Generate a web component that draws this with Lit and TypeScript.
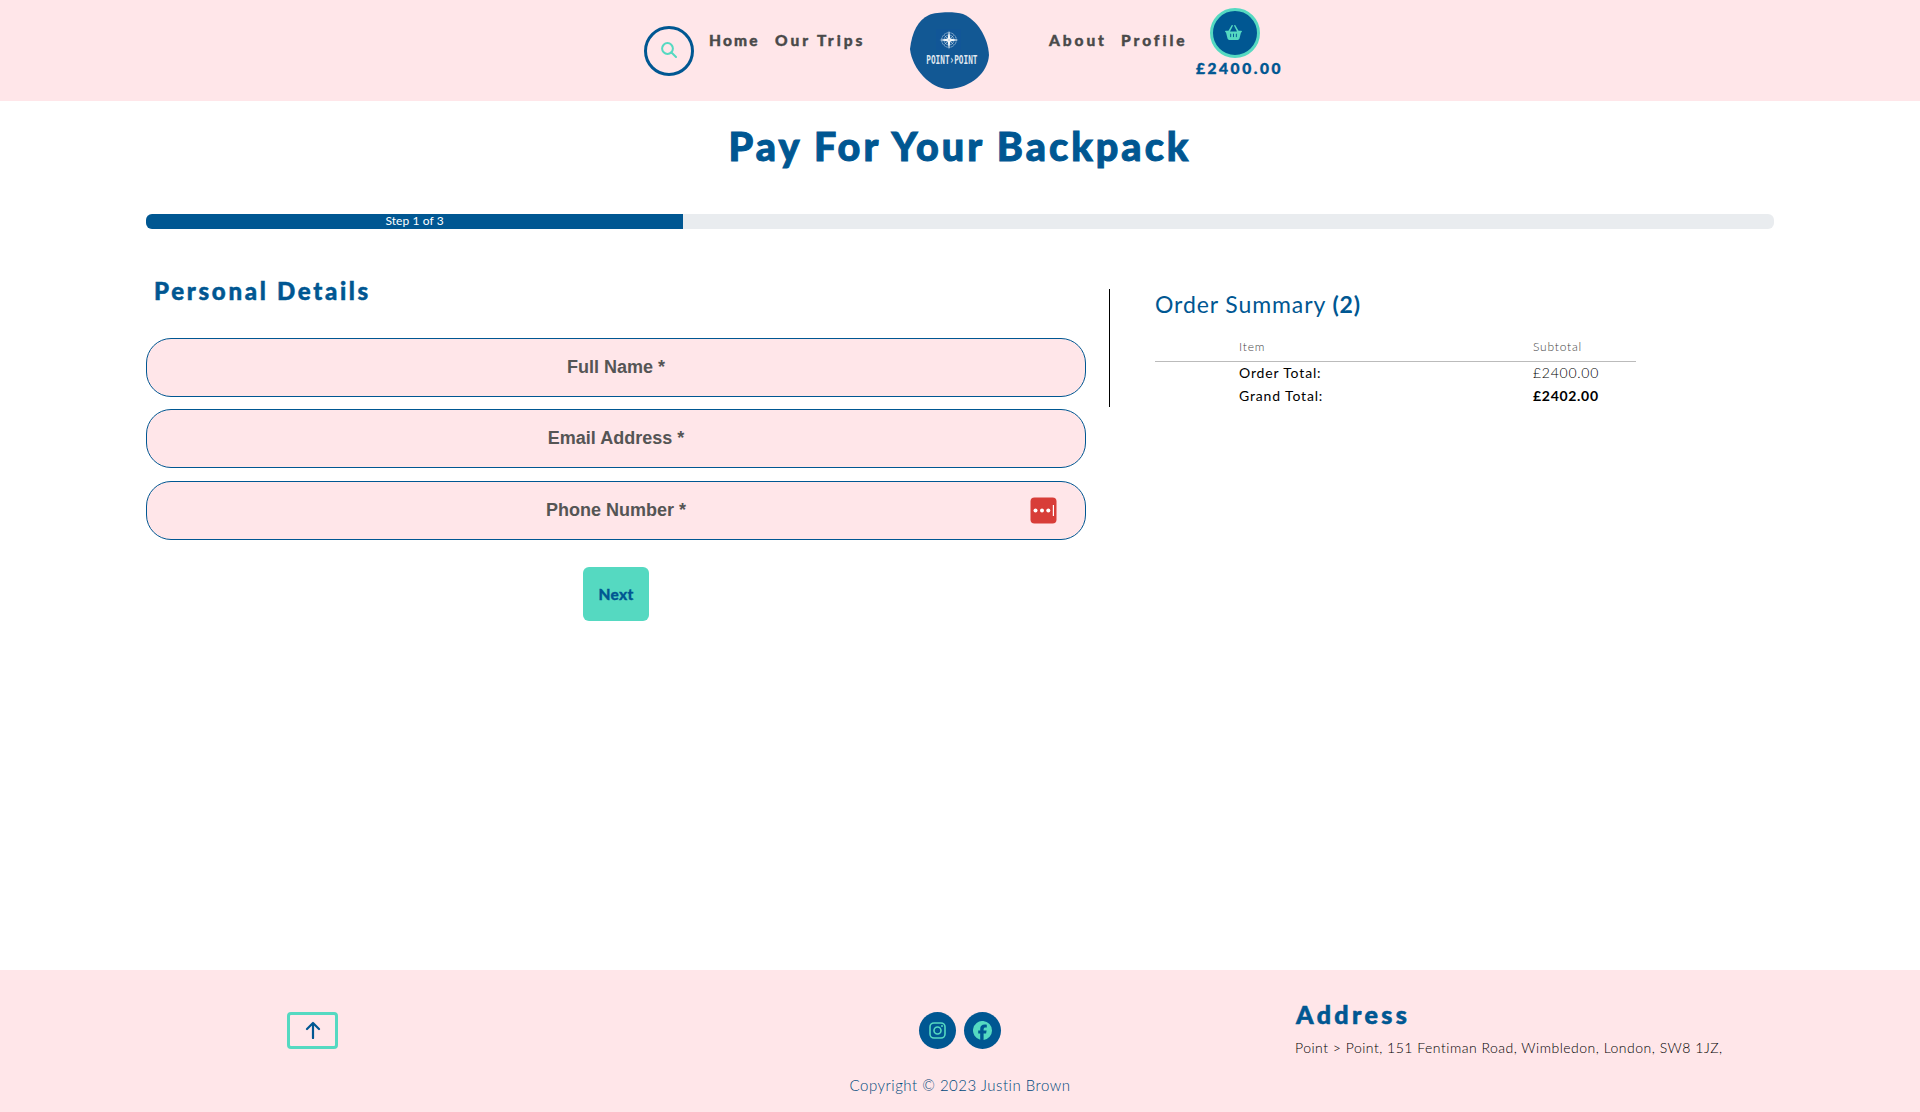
import { LitElement, html, css, svg } from "lit";
import { customElement } from "lit/decorators.js";

const theme = css`
  :host {
    --blue: #005792;
    --teal: #55d9c1;
    --pink: #ffe6e9;
    --round: Lato, "Open Sans", sans-serif;
    --hand: Lato, "Open Sans", sans-serif;
    display: block;
    box-sizing: border-box;
  }
  * { box-sizing: border-box; }
  svg { display: block; }
  a { color: inherit; text-decoration: none; }
  h1, h2, h3, p { margin: 0; white-space: nowrap; }
`;

@customElement("site-header")
export class SiteHeader extends LitElement {
  static styles = [theme, css`
    :host { height: 101px; background: var(--pink); font: 900 15.5px/20px var(--round); color: #4a4a4a; }
    .bar { display: flex; align-items: flex-start; padding-left: 644px; height: 101px; white-space: nowrap; }
    .search { width: 50px; height: 50px; margin-top: 26px; border: 3px solid var(--blue); border-radius: 50%; display: grid; place-items: center; }
    .search svg { margin-left: -1px; margin-top: -2px; }
    .link { margin-top: 30px; -webkit-text-stroke: .4px currentColor; }
    .home { margin-left: 15px; width: 66px; letter-spacing: 2.2px; }
    .trips { width: 135px; letter-spacing: 3px; }
    .logo { margin-top: 12px; width: 79px; height: 77px; margin-right: 60px; overflow: visible; }
    .about { width: 72px; letter-spacing: 2.9px; }
    .profile { width: 74px; letter-spacing: 2.95px; }
    .bag { margin-top: 8px; width: 92px; color: var(--blue); display: flex; flex-direction: column; }
    .disc { width: 50px; height: 50px; margin-left: 15px; border: 3px solid var(--teal); border-radius: 50%; background: var(--blue); display: grid; place-items: center; }
    .disc svg { margin: -1px 0 0 -3px; }
    .sum { margin-left: 1px; letter-spacing: 2.55px; -webkit-text-stroke: .4px currentColor; }
  `];
  render() {
    return html`<nav class="bar">
      <a class="search" aria-label="Search">
        <svg width="16" height="16" viewBox="0 0 16 16" fill="none" stroke="#55d9c1" stroke-width="2" stroke-linecap="round"><circle cx="6.5" cy="6.5" r="5.4"/><path d="M10.5 10.5 15 15"/></svg>
      </a>
      <a class="link home">Home</a><a class="link trips">Our Trips</a>
      <svg class="logo" viewBox="0 0 79 77">
        <path fill="#125894" d="M0 37C2 20 8 8 19 3 27-.5 45-.5 53 2 67 8 78 25 79 43 78 60 62 76 38 77 21 77 2 57 0 37Z"/>
        <path fill="#10559a" opacity=".6" d="M26 17h25v21H26Z"/>
        <g transform="translate(39 28)" stroke="#c3d3e3" fill="none">
          <circle r="7.300" stroke-width=".8" stroke-dasharray="1.200 .5"/><circle r="5" stroke-width=".6"/>
          <path stroke="none" fill="#f4f7fa" d="M0-9.500 1.400-1.400 9.500 0 1.400 1.400 0 9.500-1.400 1.400-9.500 0-1.400-1.400Z"/>
          <path stroke-width=".7" d="M-4.500-4.500 4.500 4.500M-4.500 4.500 4.500-4.500"/>
        </g>
        <text transform="translate(16.300 52) scale(.595 1)" fill="#e0e8f0" font-family="DejaVu Sans Mono" font-size="13">POINT›POINT</text>
      </svg>
      <a class="link about">About</a><a class="link profile">Profile</a>
      <a class="bag">
        <span class="disc"><svg width="17" height="15" viewBox="0 0 576 512" fill="#55d9c1"><path d="M253 3.100c11.900 5.900 16.700 20.300 10.700 32.200L169 224H407L312.500 35.200c-5.900-11.900-1.100-26.300 10.700-32.200s26.300-1.100 32.200 10.700L460.600 192H544c17.700 0 32 14.300 32 32s-14.300 32-32 32L492.100 463.500C485 492 459.400 512 430 512H146c-29.400 0-55-20-62.100-48.500L32 256c-17.700 0-32-14.300-32-32s14.300-32 32-32h83.400L220.700 13.700C226.600 1.800 241.100-3 253 3.100ZM208 304c0-8.800-7.200-16-16-16s-16 7.200-16 16v96c0 8.800 7.200 16 16 16s16-7.200 16-16Zm80-16c-8.800 0-16 7.200-16 16v96c0 8.800 7.200 16 16 16s16-7.200 16-16v-96c0-8.800-7.200-16-16-16Zm112 16c0-8.800-7.200-16-16-16s-16 7.200-16 16v96c0 8.800 7.200 16 16 16s16-7.200 16-16Z"/></svg></span>
        <span class="sum">£2400.00</span>
      </a>
    </nav>`;
  }
}

@customElement("checkout-form")
export class CheckoutForm extends LitElement {
  static styles = [theme, css`
    :host { width: 940px; }
    h2 { margin: 1px 0 31px 8px; color: var(--blue); font: 900 24px/32px var(--round); letter-spacing: 2.7px; -webkit-text-stroke: .5px currentColor; }
    .fields { display: grid; grid-template-rows: 59px 60px 59px; row-gap: 12px; }
    .field { display: grid; grid-template-columns: 1fr auto 1fr; align-items: center; height: 59px; padding-bottom: 2px; border: 1px solid var(--blue); border-radius: 25px; background: var(--pink); color: #555; font: bold 18px/20px "Liberation Sans", sans-serif; }
    .field span { grid-column: 2; white-space: pre; }
    .key { justify-self: end; margin: 1px 28px 0 0; }
    .next { display: block; margin: 27px auto 0; width: 66px; height: 54px; padding: 0; border: 0; border-radius: 6px; background: var(--teal); color: var(--blue); font: 900 15.500px/54px var(--round); letter-spacing: .3px; -webkit-text-stroke: .3px currentColor; }
  `];
  render() {
    return html`<h2>Personal Details</h2>
      <div class="fields">
        <label class="field"><span>Full Name *</span></label>
        <label class="field"><span>Email Address *</span></label>
        <label class="field"><span>Phone Number *</span>
          <svg class="key" width="27" height="27" viewBox="0 0 27 27"><rect x=".5" y=".5" width="26" height="26" rx="4" fill="#d83d38"/><g fill="#fff"><circle cx="5.500" cy="13.500" r="2"/><circle cx="12" cy="13.500" r="2"/><circle cx="18.300" cy="13.500" r="2"/><rect x="22.800" y="8" width="1.200" height="11"/></g></svg>
        </label>
      </div>
      <button class="next">Next</button>`;
  }
}

@customElement("order-summary")
export class OrderSummary extends LitElement {
  static styles = [theme, css`
    :host { width: 528px; height: 118px; border-left: 1px solid #000; padding: 0 0 0 45px; font-family: var(--hand); color: #000; }
    h3 { color: var(--blue); font-weight: 400; font-size: 23px; line-height: 30px; letter-spacing: .9px; }
    b { font-weight: 700; }
    .row { display: grid; grid-template-columns: 294px 1fr; padding-left: 84px; width: 481px; font-size: 14px; line-height: 23px; white-space: nowrap; letter-spacing: .85px; }
    .head { margin-top: 16px; margin-bottom: -1px; padding-bottom: 3px; border-bottom: 1px solid #bbb; color: #444; font-size: 12px; font-weight: 300; letter-spacing: .8px; }
    .light { font-weight: 300; letter-spacing: .75px; }
    .bold { font-weight: 700; letter-spacing: .7px; }
  `];
  render() {
    return html`<h3>Order Summary <b>(2)</b></h3>
      <div class="row head"><span>Item</span><span>Subtotal</span></div>
      <div class="row"><span>Order Total:</span><span class="light">£2400.00</span></div>
      <div class="row"><span>Grand Total:</span><span class="bold">£2402.00</span></div>`;
  }
}

const instagram = svg`<rect x="1" y="1" width="15" height="15" rx="4" fill="none" stroke="#55d9c1" stroke-width="1.600"/><circle cx="8.500" cy="8.500" r="3.500" fill="none" stroke="#55d9c1" stroke-width="1.600"/><circle cx="13" cy="4" r="1" fill="#55d9c1"/>`;
const facebook = svg`<path fill="#55d9c1" d="M19 9.500A9.500 9.500 0 1 0 7.200 18.700V12.400H5.200V9.500h2V8.300c0-3.200 1.500-4.700 4.600-4.700.6 0 1.600.1 2 .2v2.600h-1.100c-1.500 0-2.100.6-2.100 2.100v1h3l-.5 2.900h-2.500V19A9.500 9.500 0 0 0 19 9.500Z"/>`;

@customElement("site-footer")
export class SiteFooter extends LitElement {
  static styles = [theme, css`
    :host { height: 142px; background: var(--pink); }
    .cols { display: grid; grid-template-columns: 632px 663px 1fr; height: 96px; }
    .up { margin: 42px 0 0 287px; width: 51px; height: 37px; border: 3px solid var(--teal); border-radius: 4px; display: grid; place-items: center; }
    .up svg { margin-top: -2px; }
    .social { display: flex; gap: 8px; padding: 42px 0 0 287px; }
    .dot { width: 37px; height: 37px; border-radius: 50%; background: var(--blue); display: grid; place-items: center; }
    .dot svg { margin-top: -1px; }
    h2 { margin: 29px 0 0 1px; color: var(--blue); font: 900 25px/30px var(--round); letter-spacing: 3.400px; -webkit-text-stroke: .6px currentColor; }
    .street { margin-top: 9px; color: #000; font: 300 14px/20px var(--hand); letter-spacing: .5px; }
    .copy { text-align: center; color: #00497c; font: 300 15px/20px var(--hand); letter-spacing: .5px; margin-top: 9px; }
  `];
  render() {
    return html`<div class="cols">
        <div><a class="up" aria-label="Top"><svg width="16" height="18" viewBox="0 0 16 18" fill="none" stroke="#005792" stroke-width="2.200" stroke-linecap="round" stroke-linejoin="round"><path d="M8 17V2M2 8 8 2l6 6"/></svg></a></div>
        <div class="social">
          <a class="dot" aria-label="Instagram"><svg width="17" height="17" viewBox="0 0 17 17">${instagram}</svg></a>
          <a class="dot" aria-label="Facebook"><svg width="19" height="19" viewBox="0 0 19 19">${facebook}</svg></a>
        </div>
        <div><h2>Address</h2><p class="street">Point &gt; Point, 151 Fentiman Road, Wimbledon, London, SW8 1JZ,</p></div>
      </div>
      <p class="copy">Copyright © 2023 Justin Brown</p>`;
  }
}

@customElement("app-root")
export class AppRoot extends LitElement {
  static styles = [theme, css`
    :host { display: flex; flex-direction: column; height: 1112px; background: #fff; }
    main { flex: 1; padding: 0 146px; }
    h1 { height: 113px; padding-top: 20px; text-align: center; color: var(--blue); font: 900 39.500px/50px var(--round); letter-spacing: 3.050px; -webkit-text-stroke: 1px currentColor; }
    .track { height: 15px; border-radius: 6px; overflow: hidden; background: #e9ecef; }
    .fill { width: 33%; height: 100%; background: var(--blue); color: #fff; text-align: center; font: 400 12px/14px var(--hand); letter-spacing: .1px; }
    .columns { display: flex; gap: 23px; padding-top: 45px; }
    order-summary { margin-top: 15px; }
  `];
  render() {
    return html`<site-header></site-header>
      <main>
        <h1>Pay For Your Backpack</h1>
        <div class="track"><div class="fill">Step 1 of 3</div></div>
        <div class="columns"><checkout-form></checkout-form><order-summary></order-summary></div>
      </main>
      <site-footer></site-footer>`;
  }
}
